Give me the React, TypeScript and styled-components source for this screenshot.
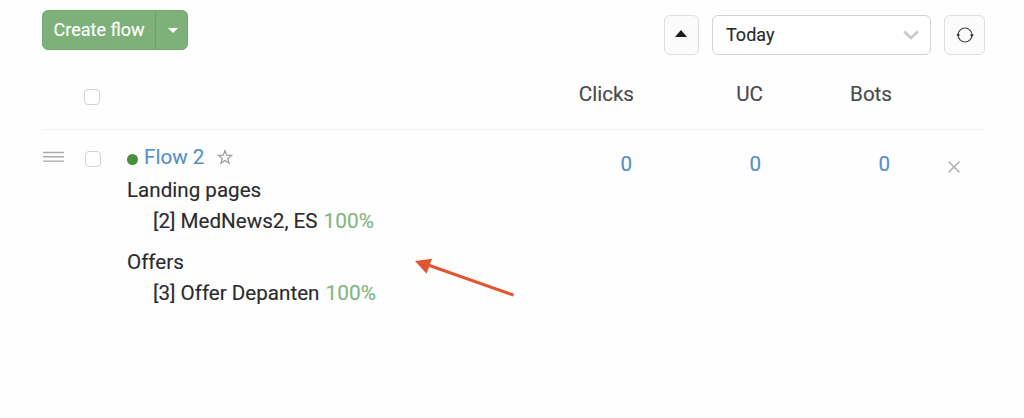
import styled, { createGlobalStyle } from "styled-components";

const App = () => {
    return (
        <Page>
            <GlobalStyle />
            <Toolbar>
                <CreateGroup>
                    <CreateButton>Create flow</CreateButton>
                    <CreateToggle aria-label="More">
                        <svg width="10" height="5" viewBox="0 0 10 5"><path d="M0 0h10L5 5z" fill="#fff" /></svg>
                    </CreateToggle>
                </CreateGroup>
                <Filters>
                    <IconButton $width={35} aria-label="Collapse">
                        <CollapseIcon width="12" height="7" viewBox="0 0 12 7"><path d="M6 0l6 7H0z" fill="#1c1c1c" /></CollapseIcon>
                    </IconButton>
                    <Select>
                        <SelectValue>Today</SelectValue>
                        <svg width="16" height="10" viewBox="0 0 16 10" fill="none"><path d="M1.2 1.5L8 8l6.8-6.5" stroke="#c8c8c8" strokeWidth="2.6" /></svg>
                    </Select>
                    <IconButton $width={41} aria-label="Refresh">
                        <svg width="18" height="16" viewBox="0 0 18 16" fill="none">
                            <circle cx="9" cy="8" r="7" stroke="#444" strokeWidth="1.2" />
                            <path d="M.3 8.4L2.1 5.9l2.1 2.5zM13.8 7.6h4.1l-2 2.5z" fill="#222" />
                        </svg>
                    </IconButton>
                </Filters>
            </Toolbar>

            <HeadRow>
                <span />
                <HeadCheckbox />
                <span />
                <HeadCell>Clicks</HeadCell>
                <HeadCell>UC</HeadCell>
                <HeadCell>Bots</HeadCell>
            </HeadRow>

            <FlowRow>
                <Handle width="21" height="12" viewBox="0 0 21 12">
                    <path d="M0 1.5h21M0 5.8h21M0 10.1h21" stroke="#aaa" strokeWidth="1.4" />
                </Handle>
                <RowCheckbox />
                <Flow>
                    <FlowTitle>
                        <Status />
                        <FlowLink>Flow 2</FlowLink>
                        <svg width="16" height="16" viewBox="0 0 16 16" fill="none">
                            <path d="M8 1.6l1.7 4.5 4.9.2-3.8 3.1 1.3 4.8L8 11.5l-4.1 2.7 1.3-4.8-3.8-3.1 4.9-.2z" stroke="#999" strokeWidth="1.2" />
                        </svg>
                    </FlowTitle>
                    <Line>Landing pages</Line>
                    <Item>[2] MedNews2, ES <Share>100%</Share></Item>
                    <OffersLine>
                        Offers
                        <Arrow width="102" height="40" viewBox="0 0 102 40">
                            <path d="M14 6L99.6 36.2" stroke="#e2562f" strokeWidth="3" />
                            <path d="M1 2l17-2.3-5.4 15z" fill="#e2562f" />
                        </Arrow>
                    </OffersLine>
                    <Item>[3] Offer Depanten <Share>100%</Share></Item>
                </Flow>
                <Count>0</Count>
                <Count>0</Count>
                <Count>0</Count>
                <Remove aria-label="Remove">
                    <svg width="12" height="12" viewBox="0 0 12 12"><path d="M.6.6l10.8 10.8M11.4.6L.6 11.4" stroke="#b3b3b3" strokeWidth="1.5" /></svg>
                </Remove>
            </FlowRow>
        </Page>
    )
}

const GlobalStyle = createGlobalStyle`
    * {
        box-sizing: border-box;
    }
    body {
        margin: 0;
        background: #fefefe;
    }
    button {
        padding: 0;
        font: inherit;
    }
    svg {
        display: block;
    }
`;

const Page = styled.div`
    height: 418px;
    padding: 10px 39px 0 42px;
    overflow: hidden;
    font-family: Roboto, sans-serif;
    font-size: 20.6px;
    line-height: 31px;
    color: #2b2b2e;
    -webkit-text-stroke: 0.15px;
`;

const Toolbar = styled.div`
    display: flex;
    justify-content: space-between;
    align-items: flex-start;
    height: 54px;
`;

const CreateGroup = styled.div`
    display: flex;
    width: 146px;
    height: 40px;
    border: 1px solid #72a86e;
    border-radius: 6px;
    background: #7eb17a;
    overflow: hidden;
`;

const CreateButton = styled.button`
    width: 112px;
    padding-bottom: 2px;
    border: 0;
    background: none;
    color: #fff;
    font-size: 18px;
`;

const CreateToggle = styled.button`
    display: flex;
    flex: 1;
    align-items: center;
    justify-content: center;
    padding-left: 3px;
    border: 0;
    border-left: 1px solid #6da169;
    background: none;
`;

const Filters = styled.div`
    display: flex;
    gap: 13px;
    padding-top: 5px;
`;

const IconButton = styled.button<{ $width: number }>`
    display: flex;
    align-items: center;
    justify-content: center;
    width: ${({ $width }) => $width}px;
    height: 40px;
    border: 1px solid #dedede;
    border-radius: 6px;
    background: #fbfbfb;
`;

const CollapseIcon = styled.svg`
    margin: 0 1px 3px 0;
`;

const Select = styled.div`
    display: flex;
    align-items: center;
    justify-content: space-between;
    width: 219px;
    height: 40px;
    padding: 0 11px 0 13px;
    border: 1px solid #d3d3d3;
    border-radius: 6px;
    background: #fff;
    font-size: 18px;
`;

const SelectValue = styled.span`
    padding-bottom: 2px;
`;

const Row = styled.div`
    display: grid;
    grid-template-columns: 42px 43px 378px 129px 129px 129px 1fr;
`;

const HeadRow = styled(Row)`
    height: 66px;
    padding-top: 15px;
    border-bottom: 1px solid #f2f2f2;
`;

const HeadCell = styled.div`
    color: #4a4a4c;
    text-align: right;
`;

const FlowRow = styled(Row)`
    padding-top: 11px;
`;

const Checkbox = styled.span`
    width: 16px;
    height: 16px;
    border: 1px solid #d2d2d2;
    border-radius: 4px;
    background: #fff;
`;

const HeadCheckbox = styled(Checkbox)`
    margin-top: 10px;
`;

const RowCheckbox = styled(Checkbox)`
    margin: 10px 0 0 1px;
`;

const Handle = styled.svg`
    margin: 10px 0 0 1px;
`;

const Flow = styled.div`
    color: #2b2b2e;
`;

const FlowTitle = styled.div`
    display: flex;
    align-items: center;
    height: 34px;
    padding-bottom: 2px;
`;

const Status = styled.span`
    width: 11px;
    height: 11px;
    margin: 5px 6px 0 0;
    border-radius: 50%;
    background: #4a8f3f;
`;

const FlowLink = styled.a`
    margin-right: 13px;
    color: #5690c4;
`;

const Line = styled.div`
    height: 31px;
    white-space: nowrap;
`;

const OffersLine = styled(Line)`
    position: relative;
    margin-top: 10px;
`;

const Item = styled(Line)`
    padding-left: 26px;
`;

const Share = styled.span`
    margin-left: 1px;
    color: #83b67f;
    font-size: 20.8px;
`;

// pointer lying over the table
const Arrow = styled.svg`
    position: absolute;
    top: 12px;
    left: 287px;
    overflow: visible;
`;

const Count = styled.div`
    padding: 8px 2px 0 0;
    color: #5690c4;
    text-align: right;
`;

const Remove = styled.button`
    align-self: start;
    justify-self: start;
    margin: 20px 0 0 56px;
    border: 0;
    background: none;
`;

export default App;
